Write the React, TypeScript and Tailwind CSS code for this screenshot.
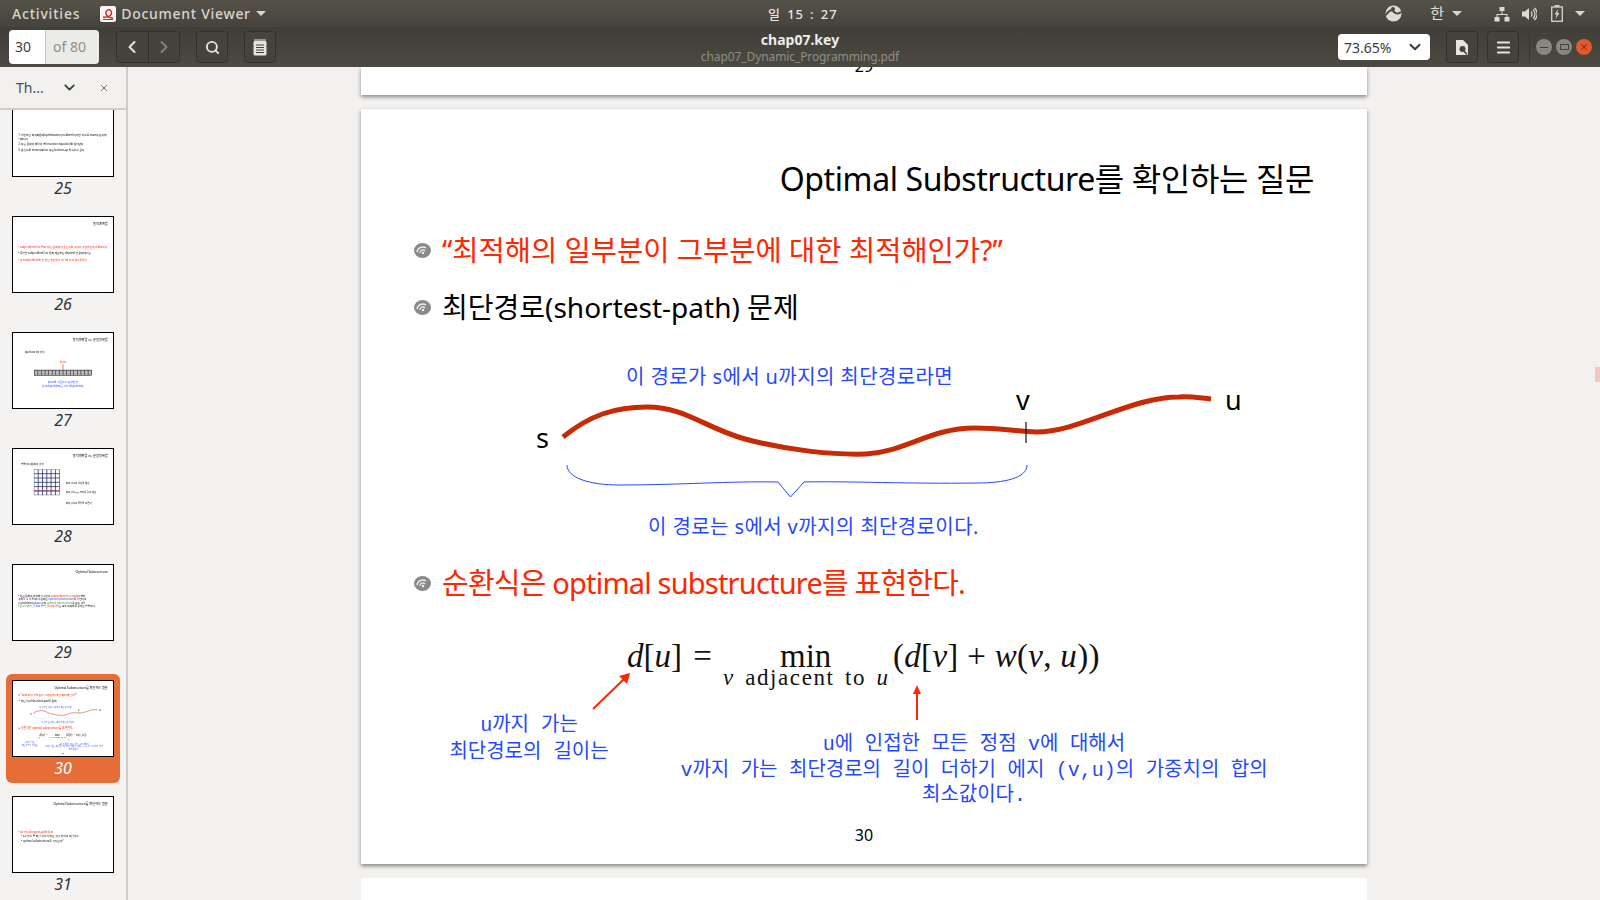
import { ChevronDown, ChevronLeft, ChevronRight, Menu, Search, X } from 'lucide-react';
import type { ReactNode } from 'react';

const ui = "font-['Noto_Sans','Noto_Sans_CJK_KR',sans-serif]";

function Caret({ className = '' }: { className?: string }) {
  return <span className={`inline-block h-0 w-0 border-x-[5px] border-t-[5px] border-x-transparent border-t-[#d8d6d0] ${className}`} />;
}

function TopBar() {
  return (
    <div className={`${ui} relative flex h-[27px] items-center bg-gradient-to-b from-[#55524a] to-[#46433c] text-[14px] font-medium text-[#d8d5cd]`}>
      <span className="ml-3 tracking-[0.8px]">Activities</span>
      <svg className="ml-[20px]" width="16" height="16" viewBox="0 0 16 16">
        <rect width="16" height="16" rx="2" fill="#f5f5f5" />
        <path d="M3 11 C8 12 13 9 11 5 C9 2 5 5 6 8 C7 11 10 12 13 12" fill="none" stroke="#d9261c" strokeWidth="1.4" />
        <path d="M3 13.5H13" stroke="#d9261c" strokeWidth="1" />
      </svg>
      <span className="ml-[5px] tracking-[0.7px]">Document Viewer</span>
      <Caret className="ml-[5px]" />
      <span className="absolute left-[768px] top-[4px] text-[13px] leading-[20px] tracking-[0.9px] text-[#e6e4df] [word-spacing:2px]">일 15 : 27</span>
      <div className="ml-auto flex items-center">
        <svg width="17" height="17" viewBox="0 0 17 17">
          <circle cx="8.5" cy="8.5" r="8" fill="#dedbd3" />
          <path d="M1 10 C4 5 7 4 9 7 C11 9 14 9 16 7" fill="none" stroke="#46433c" strokeWidth="2" />
          <circle cx="8" cy="4" r="2" fill="#46433c" />
        </svg>
        <span className="ml-[28px] text-[15px] font-normal text-[#e2e0da]">한</span>
        <Caret className="ml-[8px]" />
        <svg className="ml-[32px]" width="16" height="16" viewBox="0 0 16 16" fill="#dedbd3">
          <rect x="5.5" y="1" width="5" height="4" />
          <rect x="0.5" y="11" width="5" height="4.5" />
          <rect x="10.5" y="11" width="5" height="4.5" />
          <path d="M7.5 5h1v3h5v3h-1V9H3.5v2h-1V8h5z" />
        </svg>
        <svg className="ml-[11px]" width="16" height="16" viewBox="0 0 16 16" fill="none" stroke="#dedbd3">
          <path d="M1 5.5h3l4-3.5v12l-4-3.5H1z" fill="#dedbd3" stroke="none" />
          <path d="M10 5.5a3.5 3.5 0 0 1 0 5M12 3.5a6 6 0 0 1 0 9M13.5 2a8 8 0 0 1 0 12" strokeWidth="1.2" />
        </svg>
        <svg className="ml-[14px]" width="12" height="17" viewBox="0 0 12 17">
          <rect x="3.5" y="0" width="5" height="2" fill="#cfccc4" />
          <rect x="0.7" y="2" width="10.6" height="14.3" fill="none" stroke="#cfccc4" strokeWidth="1.4" />
          <path d="M7 4 3.5 9.5h2L4.5 14 8.5 8h-2z" fill="#cfccc4" />
        </svg>
        <Caret className="mr-[15px] ml-[12px]" />
      </div>
    </div>
  );
}

function ToolButton({ children, className = '' }: { children: ReactNode; className?: string }) {
  return (
    <div className={`flex h-[32px] w-[32px] items-center justify-center rounded-[4px] border border-[#33312c] bg-[#45433c] ${className}`}>
      {children}
    </div>
  );
}

function HeaderBar() {
  return (
    <div className={`${ui} relative flex h-[40px] items-center bg-gradient-to-b from-[#403e38] to-[#4c4941] text-[#e6e4df]`}>
      <div className="ml-[9px] flex h-[34px] w-[90px] overflow-hidden rounded-[4px] text-[14px] leading-[34px]">
        <span className="w-[36px] bg-white pl-[6px] text-[#3c3c3c]">30</span>
        <span className="flex-1 border-l border-[#c4c2bd] bg-[#ebebe8] pl-[7px] text-[#8f8f8a]">of 80</span>
      </div>
      <div className="ml-[17px] flex h-[32px] w-[64px] rounded-[4px] border border-[#33312c] bg-[#45433c]">
        <div className="flex flex-1 items-center justify-center border-r border-[#33312c]">
          <ChevronLeft size={20} strokeWidth={2.4} color="#e6e4df" />
        </div>
        <div className="flex flex-1 items-center justify-center">
          <ChevronRight size={20} strokeWidth={2.4} color="#85827a" />
        </div>
      </div>
      <ToolButton className="ml-[16px]">
        <Search size={15} strokeWidth={3} color="#e6e4df" />
      </ToolButton>
      <ToolButton className="ml-[16px]">
        <svg width="14" height="17" viewBox="0 0 14 17">
          <rect x="0.5" y="2" width="13" height="14.5" rx="1.5" fill="#e6e4df" />
          <path d="M2 0v3M4 0v3M6 0v3M8 0v3M10 0v3M12 0v3" stroke="#e6e4df" strokeWidth="1" />
          <path d="M3 6h8M3 8.5h8M3 11h8M3 13.5h8" stroke="#45433c" strokeWidth="1" />
        </svg>
      </ToolButton>
      <div className="absolute left-[600px] top-[4px] w-[400px] text-center leading-none">
        <div className="text-[14px] leading-[18px] font-bold text-[#eeece7]">chap07.key</div>
        <div className="mt-[1px] text-[12px] leading-[14px] tracking-[-0.1px] text-[#908d85]">chap07_Dynamic_Programming.pdf</div>
      </div>
      <div className="ml-auto flex h-[26px] w-[92px] items-center justify-between rounded-[4px] bg-white pr-[6px] pl-[6px] text-[14px] text-[#3c3c3c]">
        73.65%
        <ChevronDown size={18} strokeWidth={2.6} color="#3c3c3c" />
      </div>
      <ToolButton className="ml-[16px]">
        <svg width="14" height="17" viewBox="0 0 14 17">
          <path d="M1 1h7l5 5v10H1z" fill="#e6e4df" />
          <circle cx="7.5" cy="10" r="3" fill="#45433c" />
          <path d="M9 12l3 3.5" stroke="#45433c" strokeWidth="1.6" />
        </svg>
      </ToolButton>
      <ToolButton className="ml-[9px]">
        <Menu size={17} strokeWidth={2.6} color="#e6e4df" />
      </ToolButton>
      <div className="ml-[10px] h-[32px] w-px bg-[#3b3934]" />
      <div className="mr-[8px] ml-[6px] flex items-center gap-[4px]">
        <div className="flex h-[16px] w-[16px] items-center justify-center rounded-full bg-[#8a8780]">
          <div className="h-px w-[8px] bg-[#45433c]" />
        </div>
        <div className="flex h-[16px] w-[16px] items-center justify-center rounded-full bg-[#8a8780]">
          <div className="h-[6px] w-[9px] border border-[#45433c]" />
        </div>
        <div className="flex h-[16px] w-[16px] items-center justify-center rounded-full bg-[#e2582a]">
          <X size={10} strokeWidth={2} color="#4a2a1c" />
        </div>
      </div>
    </div>
  );
}

function Swirl() {
  return (
    <svg width="19" height="18" viewBox="0 0 19 18" className="shrink-0 blur-[0.4px]">
      <ellipse cx="9.5" cy="9.5" rx="8.5" ry="7.5" fill="#8a8a8a" />
      <path d="M4 11 C5 6 10 5 13 7" fill="none" stroke="#f0f0f0" strokeWidth="1.4" />
      <path d="M7 12 C7 9 10 8 12 10" fill="none" stroke="#f0f0f0" strokeWidth="1.2" />
      <circle cx="10" cy="12" r="1.2" fill="#f0f0f0" />
    </svg>
  );
}

const slide = "font-['Noto_Sans','Noto_Sans_CJK_KR',sans-serif]";
const mono = "font-['Liberation_Mono','Noto_Sans_CJK_KR',monospace]";
const serif = "font-['Liberation_Serif',serif]";

function Bullet({ children, className = '' }: { children: ReactNode; className?: string }) {
  return (
    <div className={`flex h-[40px] items-center ${className}`}>
      <Swirl />
      <span className="ml-[10px] whitespace-nowrap">{children}</span>
    </div>
  );
}

function Slide() {
  return (
    <div className={`${slide} relative h-[755px] w-[1006px] overflow-hidden bg-white text-black`}>
      <div className="pt-[50px] pr-[53px] text-right text-[32px] leading-[40px] tracking-[-0.4px] whitespace-nowrap">
        Optimal Substructure를 확인하는 질문
      </div>
      <div className="pl-[52px]">
        <Bullet className="mt-[31px] text-[28.5px] text-[#ff2600]">“최적해의 일부분이 그부분에 대한 최적해인가?”</Bullet>
        <Bullet className="mt-[17px] text-[28px]">최단경로(shortest-path) 문제</Bullet>
      </div>
      {/* 경로 그림 */}
      <div className="relative mt-[33px] h-[203px] w-full text-[20px] leading-[28px] text-[#2448ff]">
        <svg className="absolute inset-0 h-[203px] w-[1006px]" viewBox="361 360 1006 203" fill="none">
          <path
            d="M563 437 C590 415 615 407 647 407 C685 407 705 428 745 439 C790 451 835 455 866 454 C905 452 930 428 975 428 C1000 428 1015 431 1036 432 C1080 432 1130 397 1179 397 C1190 396 1200 398 1211 399"
            stroke="#c92a06"
            strokeWidth="5"
          />
          <path d="M1026 422V443" stroke="#111" strokeWidth="1.2" />
          <path
            d="M567 465 C567 478 590 485 619 485 C680 485 730 481 778 482 L790.5 497 L804 482 C850 481 910 484 976 483 C1005 483 1027 478 1027 465"
            stroke="#2448ff"
            strokeWidth="1"
          />
        </svg>
        <span className="absolute top-[3px] left-[265px] whitespace-nowrap tracking-[0.4px]">이 경로가 s에서 u까지의 최단경로라면</span>
        <span className="absolute top-[153px] left-[287px] whitespace-nowrap tracking-[0.4px]">이 경로는 s에서 v까지의 최단경로이다.</span>
        <span className="absolute top-[60px] left-[175px] text-[27px] leading-[36px] text-black">s</span>
        <span className="absolute top-[22px] left-[655px] text-[27px] leading-[36px] text-black">v</span>
        <span className="absolute top-[22px] left-[864px] text-[27px] leading-[36px] text-black">u</span>
      </div>
      <div className="pl-[52px]">
        <Bullet className="text-[29px] tracking-[-0.8px] text-[#ff2600]">순환식은 optimal substructure를 표현한다.</Bullet>
      </div>
      {/* 순환식 */}
      <div className="relative mt-[17px] h-[200px] w-full">
        <svg className="absolute inset-0 h-[200px] w-[1006px]" viewBox="361 620 1006 200" fill="none">
          <path d="M593 709 L624 679" stroke="#ff2600" strokeWidth="2" />
          <path d="M630 673 L627 684 L619 676 Z" fill="#ff2600" />
          <path d="M917 720V691" stroke="#ff2600" strokeWidth="2" />
          <path d="M917 685 L921 694 H913 Z" fill="#ff2600" />
        </svg>
        <div className={`${serif} absolute top-[15px] left-[266px] text-[33px] leading-[42px] whitespace-nowrap text-[#111] [word-spacing:3px]`}>
          <i>d</i>[<i>u</i>] =
        </div>
        <div className={`${serif} absolute top-[22px] left-[419px] text-[33px] leading-[28px] text-[#111]`}>min</div>
        <div className={`${serif} absolute top-[50px] left-[362px] text-[23px] leading-[16px] tracking-[1.6px] whitespace-nowrap text-[#111] [word-spacing:3px]`}>
          <i>v</i> adjacent to <i>u</i>
        </div>
        <div className={`${serif} absolute top-[15px] left-[532px] text-[33px] leading-[42px] tracking-[0.3px] whitespace-nowrap text-[#111]`}>
          (<i>d</i>[<i>v</i>] + <i>w</i>(<i>v</i>, <i>u</i>))
        </div>
        <div className={`${mono} absolute top-[92px] left-[68px] w-[200px] text-center text-[20px] leading-[27px] text-[#2448ff]`}>
          u까지 가는
          <br />
          최단경로의 길이는
        </div>
        <div className={`${mono} absolute top-[112px] left-[263px] w-[700px] text-center text-[20px] leading-[25.5px] text-[#2448ff] [word-spacing:-0.5px]`}>
          u에 인접한 모든 정점 v에 대해서
          <br />
          v까지 가는 최단경로의 길이 더하기 에지 (v,u)의 가중치의 합의
          <br />
          최소값이다.
        </div>
      </div>
      <div className="absolute bottom-[17px] left-0 w-full text-center text-[16px] leading-[24px]">30</div>
    </div>
  );
}

function MiniSlide({ title, items, children }: { title: string; items?: { text: string; color?: string }[]; children?: ReactNode }) {
  return (
    <div className={`${slide} relative h-[755px] w-[1006px] overflow-hidden bg-white text-black`}>
      <div className="h-[90px] pt-[50px] pr-[53px] text-right text-[32px] leading-[40px] whitespace-nowrap">{title}</div>
      {items && (
        <div className="mt-[190px] flex flex-col gap-[24px] px-[52px] text-[27px] leading-[40px]">
          {items.map((it) => (
            <div key={it.text} className={it.color}>
              • {it.text}
            </div>
          ))}
        </div>
      )}
      {children}
    </div>
  );
}

function Thumb({ n, active, children }: { n: number; active?: boolean; children: ReactNode }) {
  return (
    <div className={`h-[109px] w-[114px] rounded-[6px] p-[6px] ${active ? 'bg-[#e66c38]' : ''}`}>
      <div className="h-[77px] w-[102px] overflow-hidden border border-black bg-white">
        <div className="h-[755px] w-[1006px] origin-top-left scale-[0.0994]">{children}</div>
      </div>
      <div className={`${ui} text-center text-[16px] leading-[22px] italic ${active ? 'text-white' : 'text-[#2e3436]'}`}>{n}</div>
    </div>
  );
}

function Sidebar() {
  return (
    <div className="flex w-[128px] shrink-0 flex-col border-r-2 border-[#cfcdca] bg-[#f4f3f2]">
      <div className={`${ui} z-10 flex h-[43px] shrink-0 items-center border-b-2 border-[#d0cecb] bg-[#f2f1f0] text-[14px] text-[#4c4c4c]`}>
        <span className="ml-[16px]">Th...</span>
        <ChevronDown className="ml-[17px]" size={17} strokeWidth={2.6} color="#3c3c3c" />
        <X className="ml-[21px]" size={10} strokeWidth={2} color="#555" />
      </div>
      <div className="-mt-[16px] flex flex-col gap-[7px] pl-[6px]">
        <Thumb n={25}>
          <MiniSlide title="">
            <div className="mt-[230px] flex flex-col gap-[14px] px-[52px] text-[27px] leading-[40px]">
              <div>1. 일반적인 최적화문제(optimization problem)에 대한 자료를 examp 분석해 가봅시다</div>
              <div>2. 작은 문제의 해답의 합(recursive equation)을 찾아낸다</div>
              <div>3. 순환식을 memoization 또는 bottom-up 방식으로 푼다</div>
            </div>
          </MiniSlide>
        </Thumb>
        <Thumb n={26}>
          <MiniSlide
            title="동적계획법"
            items={[
              { text: 'subproblem들의 중복: 많은 문제에서 순환식을 그대로 구현하면 비효율적이다', color: 'text-[#ff2600]' },
              { text: '동일한 subproblem들이 반복 계산되는 depend 한 문제에서는' },
              { text: '각 subproblem을 한 번만 계산해서 저장해 두고 재사용한다', color: 'text-[#ff2600]' },
            ]}
          />
        </Thumb>
        <Thumb n={27}>
          <MiniSlide title="동적계획법 vs. 분할정복법">
            <div className="mt-[80px] ml-[120px] text-[27px]">quicksort의 경우</div>
            <div className="mt-[60px] text-center text-[27px] text-[#ff2600]">pivot</div>
            <div className="mx-auto h-[60px] w-[6px] bg-[#ff2600]" />
            <div className="mx-[212px] flex h-[56px] border-[5px] border-black bg-[#bbbbbb]">
              {Array.from({ length: 16 }, (_, i) => (
                <div key={i} className="flex-1 border-r-[5px] border-black last:border-r-0" />
              ))}
            </div>
            <div className="mt-[50px] text-center text-[27px] leading-[40px] text-[#2448ff]">
              pivot을 기준으로 분할된 두
              <br />
              두 subproblem은 서로 disjoint하다.
            </div>
          </MiniSlide>
        </Thumb>
        <Thumb n={28}>
          <MiniSlide title="동적계획법 vs. 분할정복법">
            <div className="mt-[40px] ml-[80px] text-[27px]">행렬경로문제의 경우</div>
            <svg className="absolute top-[205px] left-[210px]" width="260" height="260" viewBox="0 0 300 300" fill="none" stroke="#222c66" strokeWidth="9">
              {[0, 50, 100, 150, 200, 250, 300].map((p) => (
                <path key={p} d={`M${p} 0V300M0 ${p}H300`} />
              ))}
              <path d="M300 0V250H0" stroke="#c0392b" strokeWidth="9" />
            </svg>
            <div className="absolute top-[300px] left-[530px] text-[24px] leading-[90px] whitespace-nowrap">
              최적 경로의 길이를 계산
              <br />
              최적 경로(r,c) 까지의 길이 계산
            </div>
            <div className="absolute top-[500px] left-[530px] text-[24px] leading-[80px] whitespace-nowrap">
              최적 경로의 끝점을 고른다
            </div>
          </MiniSlide>
        </Thumb>
        <Thumb n={29}>
          <MiniSlide title="Optimal Substructure">
            <div className="mt-[200px] px-[52px] text-[26px] leading-[36px] whitespace-nowrap">
              <div>
                • 어떤 문제의 최적해가 그것의 <span className="text-[#ff2600]">subproblem들의 최적해</span>로부터
              </div>
              <div>
                구해질 수 있을 때 그 문제는 <span className="text-[#2448ff]">optimal substructure</span>를 가진다고
              </div>
              <div>
                이 problem의 d-n-c 구조 <span className="text-[#2e9e2e]">optimal substructure</span>를 갖는 경우
              </div>
              <div>
                • <span className="text-[#2e9e2e]">분할정복법</span>, <span className="text-[#2448ff]">탐욕적 방법</span>, <span className="text-[#ff2600]">동적계획법</span>은 모두 최적해를 구하는 방법이다.
              </div>
            </div>
          </MiniSlide>
        </Thumb>
        <Thumb n={30} active>
          <Slide />
        </Thumb>
        <Thumb n={31}>
          <MiniSlide title="Optimal Substructure를 확인하는 질문">
            <div className="mt-[240px] px-[52px] text-[27px] leading-[44px]">
              <div className="text-[#ff2600]">• 최장경로(longest-path) 문제</div>
              <div className="pl-[30px]">• s-v 경로 중 최장 경로가 되는 것 u 까지의 최장경로</div>
              <div className="pl-[30px]">• optimal substructure를 가지는가?</div>
            </div>
          </MiniSlide>
        </Thumb>
      </div>
    </div>
  );
}

export default function App() {
  return (
    <div className="flex h-[900px] w-[1600px] flex-col overflow-hidden bg-[#f2f1f0]">
      <TopBar />
      <HeaderBar />
      <div className="flex min-h-0 flex-1">
        <Sidebar />
        <div className="relative flex flex-1 flex-col items-center gap-[14px] overflow-hidden">
          <div className={`${slide} relative h-[28px] w-[1006px] shrink-0 overflow-hidden bg-white text-center text-[16px] shadow-[0_2px_4px_rgba(0,0,0,0.45)]`}>
            <span className="absolute -top-[13px] left-0 w-full leading-[24px]">29</span>
          </div>
          <div className="shrink-0 shadow-[0_2px_4px_rgba(0,0,0,0.45)]">
            <Slide />
          </div>
          <div className="h-[40px] w-[1006px] shrink-0 bg-white" />
          <div className="absolute top-[300px] right-0 h-[15px] w-[5px] bg-[#f2c9b6]" />
        </div>
      </div>
    </div>
  );
}
